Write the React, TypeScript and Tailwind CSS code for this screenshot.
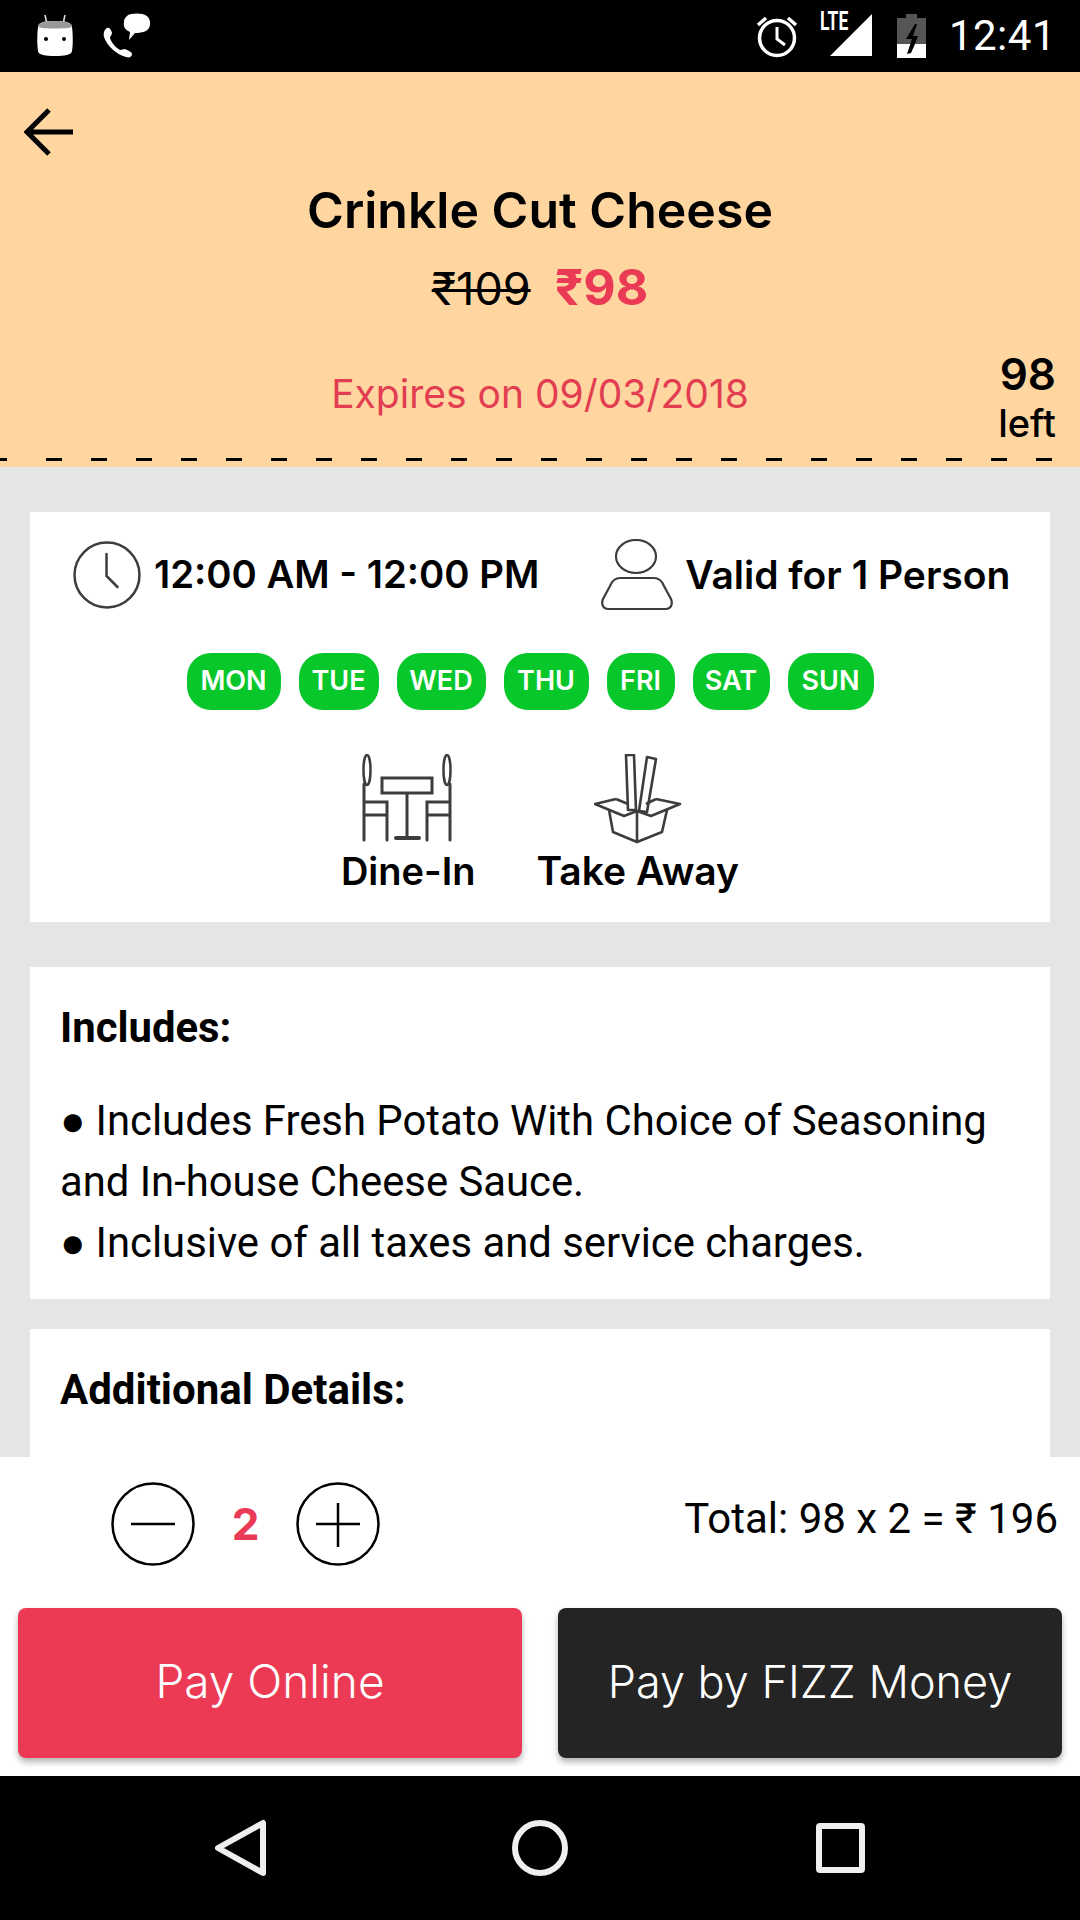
const days = [
  { label: "MON", width: "w-[94px]" },
  { label: "TUE", width: "w-[80px]" },
  { label: "WED", width: "w-[89px]" },
  { label: "THU", width: "w-[85px]" },
  { label: "FRI", width: "w-[68px]" },
  { label: "SAT", width: "w-[77px]" },
  { label: "SUN", width: "w-[86px]" },
];

const dashes = Array.from({ length: 23 }, (_, i) => i);

function AndroidIcon() {
  return (
    <svg width="36" height="42" viewBox="0 0 36 42" className="shrink-0">
      <path d="M8 0l2 9M28 0l-2 9" stroke="#ddd" strokeWidth="1.6" />
      <path d="M1 12c0-5 7-6 17-6s17 1 17 6c1 8 1 18 0 24 0 4-8 5-17 5S1 40 1 36C0 30 0 20 1 12z" fill="#fff" />
      <path d="M1 12c0-5 7-6 17-6s17 1 17 6c-5 2-29 2-34 0z" fill="#999" />
      <circle cx="9" cy="24" r="2" fill="#000" />
      <circle cx="27" cy="24" r="2" fill="#000" />
    </svg>
  );
}

function CallChatIcon() {
  return (
    <svg width="48" height="46" viewBox="0 0 48 46" className="shrink-0">
      <path d="M4 15c-2 1-4 4-3 9 3 9 12 17 22 20 3 1 6 0 6-3 0-2-3-3-7-5-2 0-3 1-5 1-4-2-9-8-10-12 0-2 2-3 2-5-1-4-3-6-5-5z" fill="#fff" />
      <path d="M28 1c11-2 20 1 19 10 0 7-7 9-15 9l-6 7 1-8c-5-2-7-5-6-10 0-4 3-7 7-8z" fill="#fff" />
    </svg>
  );
}

function AlarmIcon() {
  return (
    <svg width="42" height="44" viewBox="0 0 42 44" fill="none" stroke="#fff" className="shrink-0">
      <circle cx="21" cy="24" r="17.5" strokeWidth="3.5" />
      <path d="M21 13v12l8 6" strokeWidth="3" />
      <path d="M2 11l8-7M40 11l-8-7" strokeWidth="3.5" />
    </svg>
  );
}

function BatteryIcon() {
  return (
    <svg width="29" height="44" viewBox="0 0 29 44" className="shrink-0">
      <path d="M0 4h9V0h11v4h9v40H0z" fill="#555" />
      <path d="M0 30h29v14H0z" fill="#fff" />
      <path d="M18 10L9 25h6l-5 15 4-1 4-9 3-8h-5l4-12z" fill="#000" />
    </svg>
  );
}

function ClockIcon() {
  return (
    <svg width="70" height="68" viewBox="0 0 70 68" fill="none" stroke="#3d3d3d" className="shrink-0">
      <circle cx="35" cy="34" r="32.5" strokeWidth="2.5" />
      <path d="M34.5 13v22l11 11" strokeWidth="2.5" strokeLinecap="round" />
    </svg>
  );
}

function PersonIcon() {
  return (
    <svg width="72" height="72" viewBox="0 0 72 72" fill="none" stroke="#3d3d3d" strokeWidth="2.2" className="shrink-0">
      <ellipse cx="35" cy="17.5" rx="20" ry="16.5" />
      <path d="M19 39c-5 0-8 3-10 8L2 60c-2 5 0 10 5 10h58c5 0 7-5 5-10l-7-13c-2-5-5-8-10-8z" />
    </svg>
  );
}

function DineInIcon() {
  return (
    <svg width="92" height="88" viewBox="0 0 92 88" fill="none" stroke="#3d3d3d" className="shrink-0">
      <rect x="20" y="24" width="50" height="15" strokeWidth="3" />
      <path d="M45 39v44" strokeWidth="3" />
      <path d="M34 84h23" strokeWidth="4" strokeLinecap="round" />
      <path d="M2 30v56M88 30v56M2 48h23v38M88 48H65v38M2 61h23M88 61H65" strokeWidth="3" strokeLinecap="round" />
      <ellipse cx="5" cy="16" rx="3.500" ry="15" strokeWidth="2.500" />
      <ellipse cx="85" cy="16" rx="3.500" ry="15" strokeWidth="2.500" />
    </svg>
  );
}

function TakeAwayIcon() {
  return (
    <svg width="88" height="90" viewBox="0 0 88 90" fill="none" stroke="#3d3d3d" strokeWidth="2.600" strokeLinejoin="round" className="shrink-0">
      <path d="M32 1h8l2 55h-8zM53 3l9 2-9 53-8-1z" />
      <path d="M22 45L1 50l29 12 13-5 14 5 29-12-24-5M22 45l12 5M62 45l-10 5" />
      <path d="M15 56l4 22 24 10 25-10 5-22M43 57v31" />
    </svg>
  );
}

function RoundButton({ plus }: { plus?: boolean }) {
  return (
    <svg width="84" height="84" viewBox="0 0 84 84" fill="none" stroke="#000" className="shrink-0">
      <circle cx="42" cy="42" r="40.500" strokeWidth="2.500" />
      <path d={plus ? "M20 42h44M42 21v44" : "M20 42h44"} strokeWidth="2.500" />
    </svg>
  );
}

export default function App() {
  return (
    <div className="w-[1080px] h-[1920px] flex flex-col overflow-hidden bg-white font-['Inter',sans-serif] text-black">
      {/* status bar */}
      <div className="h-[72px] bg-black flex items-center shrink-0 pl-[37px] pr-[24px]">
        <AndroidIcon />
        <div className="ml-[30px]">
          <CallChatIcon />
        </div>
        <div className="ml-auto flex items-center">
          <AlarmIcon />
          <div className="relative w-[54px] h-[44px] ml-[20px]">
            <svg width="42" height="42" viewBox="0 0 42 42" className="absolute right-0 top-0">
              <path d="M42 0v42H0z" fill="#fff" />
            </svg>
            <span className="absolute left-[-4px] top-[-7px] text-[25px] leading-[30px] text-white font-['Roboto',sans-serif] font-bold scale-x-[0.7]">
              LTE
            </span>
          </div>
          <div className="ml-[25px]">
            <BatteryIcon />
          </div>
          <span className="ml-[23px] text-[42px] leading-none text-white font-['Roboto',sans-serif] tracking-[0.5px]">12:41</span>
        </div>
      </div>

      {/* coupon header */}
      <div className="h-[395px] bg-[#FFD6A0] flex flex-col shrink-0">
        <div className="pl-[24px] pt-[35px] h-[116px] shrink-0">
          <svg width="50" height="50" viewBox="0 0 50 50" fill="none" stroke="#000" strokeWidth="5">
            <path d="M49 25H4M25 3L3 25l22 22" />
          </svg>
        </div>
        <div className="text-center text-[50px] leading-[44px] font-semibold">Crinkle Cut Cheese</div>
        <div className="flex justify-center items-baseline gap-[24px] mt-[30px] leading-[50px]">
          <span className="text-[45px] line-through decoration-[3px]">₹109</span>
          <span className="text-[50px] font-bold text-[#EA3A55]">₹98</span>
        </div>
        <div className="grid grid-cols-[1fr_auto_1fr] items-end mt-[37px] px-[24px]">
          <div />
          <div className="text-[39px] leading-[46px] text-[#E33D52] pb-[28px]">Expires on 09/03/2018</div>
          <div className="text-right font-semibold">
            <div className="text-[44px] leading-[46px]">98</div>
            <div className="mt-[4px] font-medium text-[38px] leading-[44px]">left</div>
          </div>
        </div>
        <div className="flex h-[3px] mt-auto mb-[6px] gap-[29px] overflow-hidden">
          <div className="w-[7px] mr-[10px] bg-black shrink-0" />
          {dashes.map((i) => (
            <div key={i} className="w-[16px] bg-black shrink-0" />
          ))}
        </div>
      </div>

      {/* scroll area */}
      <div className="flex-1 min-h-0 bg-[#E4E6E5] px-[30px] pt-[45px] flex flex-col overflow-hidden">
        <div className="h-[410px] bg-white shrink-0 flex flex-col items-center">
          <div className="flex items-center w-full pl-[42px] h-[134px] pb-[8px] shrink-0">
            <ClockIcon />
            <span className="ml-[12px] text-[38.3px] font-semibold whitespace-nowrap">12:00 AM - 12:00 PM</span>
            <div className="ml-[62px]">
              <PersonIcon />
            </div>
            <span className="ml-[12px] text-[39px] font-semibold whitespace-nowrap">Valid for 1 Person</span>
          </div>
          <div className="flex gap-[18px] mt-[7px] mr-[20px]">
            {days.map((day) => (
              <div
                key={day.label}
                className={`${day.width} h-[57px] rounded-[24px] bg-[#08C72B] text-white text-[27px] font-semibold flex items-center justify-center`}
              >
                {day.label}
              </div>
            ))}
          </div>
          <div className="flex justify-center gap-[61px] mt-[44px]">
            <div className="flex flex-col items-center">
              <DineInIcon />
              <span className="mt-[6px] text-[38px] leading-[46px] font-semibold">Dine-In</span>
            </div>
            <div className="flex flex-col items-center">
              <TakeAwayIcon />
              <span className="mt-[4px] text-[39px] leading-[46px] font-semibold">Take Away</span>
            </div>
          </div>
        </div>

        <div className="h-[332px] mt-[45px] bg-white shrink-0 px-[30px] pt-[31px] font-['Roboto',sans-serif] text-[41.8px] leading-[61px]">
          <div className="font-bold leading-[60px] mb-[32px]">Includes:</div>
          <div>● Includes Fresh Potato With Choice of Seasoning</div>
          <div>and In-house Cheese Sauce.</div>
          <div>● Inclusive of all taxes and service charges.</div>
        </div>

        <div className="h-[200px] mt-[30px] bg-white shrink-0 px-[30px] pt-[31px] font-['Roboto',sans-serif]">
          <div className="font-bold text-[42px] leading-[60px]">Additional Details:</div>
        </div>
      </div>

      {/* quantity + pay */}
      <div className="h-[319px] bg-white shrink-0 flex flex-col">
        <div className="flex items-center h-[151px] pl-[111px] pr-[22px] pb-[18px] shrink-0">
          <RoundButton />
          <span className="w-[101px] text-center text-[44px] font-bold text-[#EA3A55]">2</span>
          <RoundButton plus />
          <span className="ml-auto mb-[10px] text-[42px] font-['Roboto',sans-serif]">Total: 98 x 2 = ₹ 196</span>
        </div>
        <div className="flex gap-[36px] px-[18px]">
          <button className="flex-1 h-[150px] pb-[3px] rounded-[8px] bg-[#EC3A55] text-white text-[46px] font-light shadow-[0_4px_6px_rgba(0,0,0,0.3)]">
            Pay Online
          </button>
          <button className="flex-1 h-[150px] pb-[3px] rounded-[8px] bg-[#242424] text-white text-[45px] font-light shadow-[0_4px_6px_rgba(0,0,0,0.3)]">
            Pay by FIZZ Money
          </button>
        </div>
      </div>

      {/* nav bar */}
      <div className="h-[144px] bg-black shrink-0">
        <svg width="1080" height="144" viewBox="0 0 1080 144" fill="none" stroke="#efefef" strokeWidth="6" strokeLinejoin="round">
          <path d="M263 47v50l-45-25z" />
          <circle cx="540" cy="72" r="25" />
          <rect x="819" y="50" width="43" height="44" rx="1" />
        </svg>
      </div>
    </div>
  );
}
